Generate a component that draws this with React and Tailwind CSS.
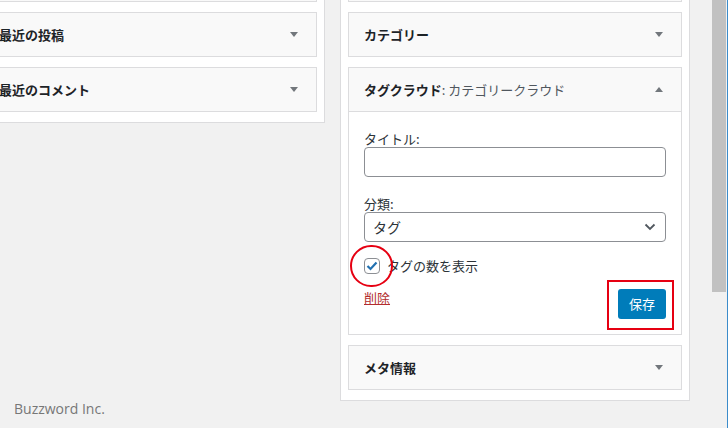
import React from "react";

const font = { fontFamily: '"Noto Sans CJK JP", "Noto Sans", sans-serif' };

function Arrow({ up }) {
  return (
    <svg width="8" height="5" viewBox="0 0 8 5" className="shrink-0">
      {up ? (
        <polygon points="0,5 8,5 4,0" fill="#72777c" />
      ) : (
        <polygon points="0,0 8,0 4,5" fill="#72777c" />
      )}
    </svg>
  );
}

function WidgetHead({ children, up }) {
  return (
    <div className="h-[43px] flex items-center justify-between pl-[15px] pr-[18px] bg-[#f9f9f9]">
      <div className="text-[13px] leading-[18px] font-semibold text-[#1d2327]">{children}</div>
      <Arrow up={up} />
    </div>
  );
}

function Widget({ children, up }) {
  return (
    <div className="border border-[#dcdcde] bg-[#f9f9f9]">
      <WidgetHead up={up}>{children}</WidgetHead>
    </div>
  );
}

export default function App() {
  return (
    <div
      className="w-[728px] h-[428px] bg-[#f1f1f1] overflow-hidden relative flex"
      style={font}
    >
      {/* left column */}
      <div className="ml-[-25px] w-[350px] flex flex-col h-full shrink-0">
        <div className="bg-white border-x border-b border-[#dcdcde] px-[7px] pb-[10px]">
          <div className="h-[2px] border-x border-b border-[#dcdcde] bg-[#f9f9f9]" />
          <div className="mt-[10px] flex flex-col gap-[10px]">
            <Widget>最近の投稿</Widget>
            <Widget>最近のコメント</Widget>
          </div>
        </div>
        <div
          className="mt-auto mb-[10px] ml-[39px] text-[14px] leading-[18px] text-[#777777]"
          style={{ fontFamily: '"Open Sans", "Noto Sans", sans-serif' }}
        >
          Buzzword Inc.
        </div>
      </div>

      {/* right column */}
      <div className="ml-[15px] w-[350px] shrink-0 self-start">
        <div className="bg-white border-x border-b border-[#dcdcde] px-[7px] pb-[10px]">
          <div className="h-[2px] border-x border-b border-[#dcdcde] bg-[#f9f9f9]" />
          <div className="mt-[10px] flex flex-col gap-[10px]">
            <Widget>カテゴリー</Widget>
            <div className="border border-[#dcdcde] bg-white">
              <div className="border-b border-[#dcdcde]">
                <WidgetHead up>
                  タグクラウド
                  <span className="font-normal text-[#50575e]">: カテゴリークラウド</span>
                </WidgetHead>
              </div>
              <div className="px-[15px] pt-[18px] pb-[15px] text-[13px] text-[#2c3338]">
                <div className="leading-[17px]">タイトル:</div>
                <div className="h-[30px] border border-[#8c8f94] rounded-[4px] bg-white" />
                <div className="mt-[18px] leading-[17px]">分類:</div>
                <div className="h-[30px] border border-[#8c8f94] rounded-[4px] bg-white flex items-center justify-between pl-[8px] pr-[9px]">
                  <span className="text-[14px] leading-[20px] text-[#2c3338]">タグ</span>
                  <svg width="12" height="8" viewBox="0 0 12 8">
                    <polyline
                      points="1.5,1.5 6,6 10.5,1.5"
                      fill="none"
                      stroke="#50575e"
                      strokeWidth="1.8"
                    />
                  </svg>
                </div>
                <div className="mt-[16px] flex items-center gap-[7px] h-[16px]">
                  <div className="w-[16px] h-[16px] border border-[#8c8f94] rounded-[4px] bg-white flex items-center justify-center">
                    <svg width="12" height="10" viewBox="0 0 12 10">
                      <polyline
                        points="1.5,5 4.5,8 10.5,1.5"
                        fill="none"
                        stroke="#2271b1"
                        strokeWidth="2.2"
                      />
                    </svg>
                  </div>
                  <span className="leading-[18px]">タグの数を表示</span>
                </div>
                <div className="mt-[15px] flex items-start justify-between">
                  <a className="leading-[18px] text-[#b32d2e] underline">削除</a>
                  <div className="w-[48px] h-[30px] rounded-[3px] bg-[#007cba] text-white flex items-center justify-center text-[13px]">
                    保存
                  </div>
                </div>
              </div>
            </div>
            <Widget>メタ情報</Widget>
          </div>
        </div>
      </div>

      <div className="flex-1" />

      {/* scrollbar */}
      <div className="w-[16px] h-full flex shrink-0">
        <div className="w-[14px] h-[292px] bg-[#c1c1c1]" />
        <div className="w-[1px]" />
        <div className="w-[1px] h-full bg-[#3b8ccb]" />
      </div>

      {/* annotations */}
      <div className="absolute left-[350px] top-[245px] w-[43px] h-[42px] rounded-full border-2 border-[#e60012]" />
      <div className="absolute left-[607px] top-[280px] w-[67px] h-[50px] border-2 border-[#e60012]" />
    </div>
  );
}
